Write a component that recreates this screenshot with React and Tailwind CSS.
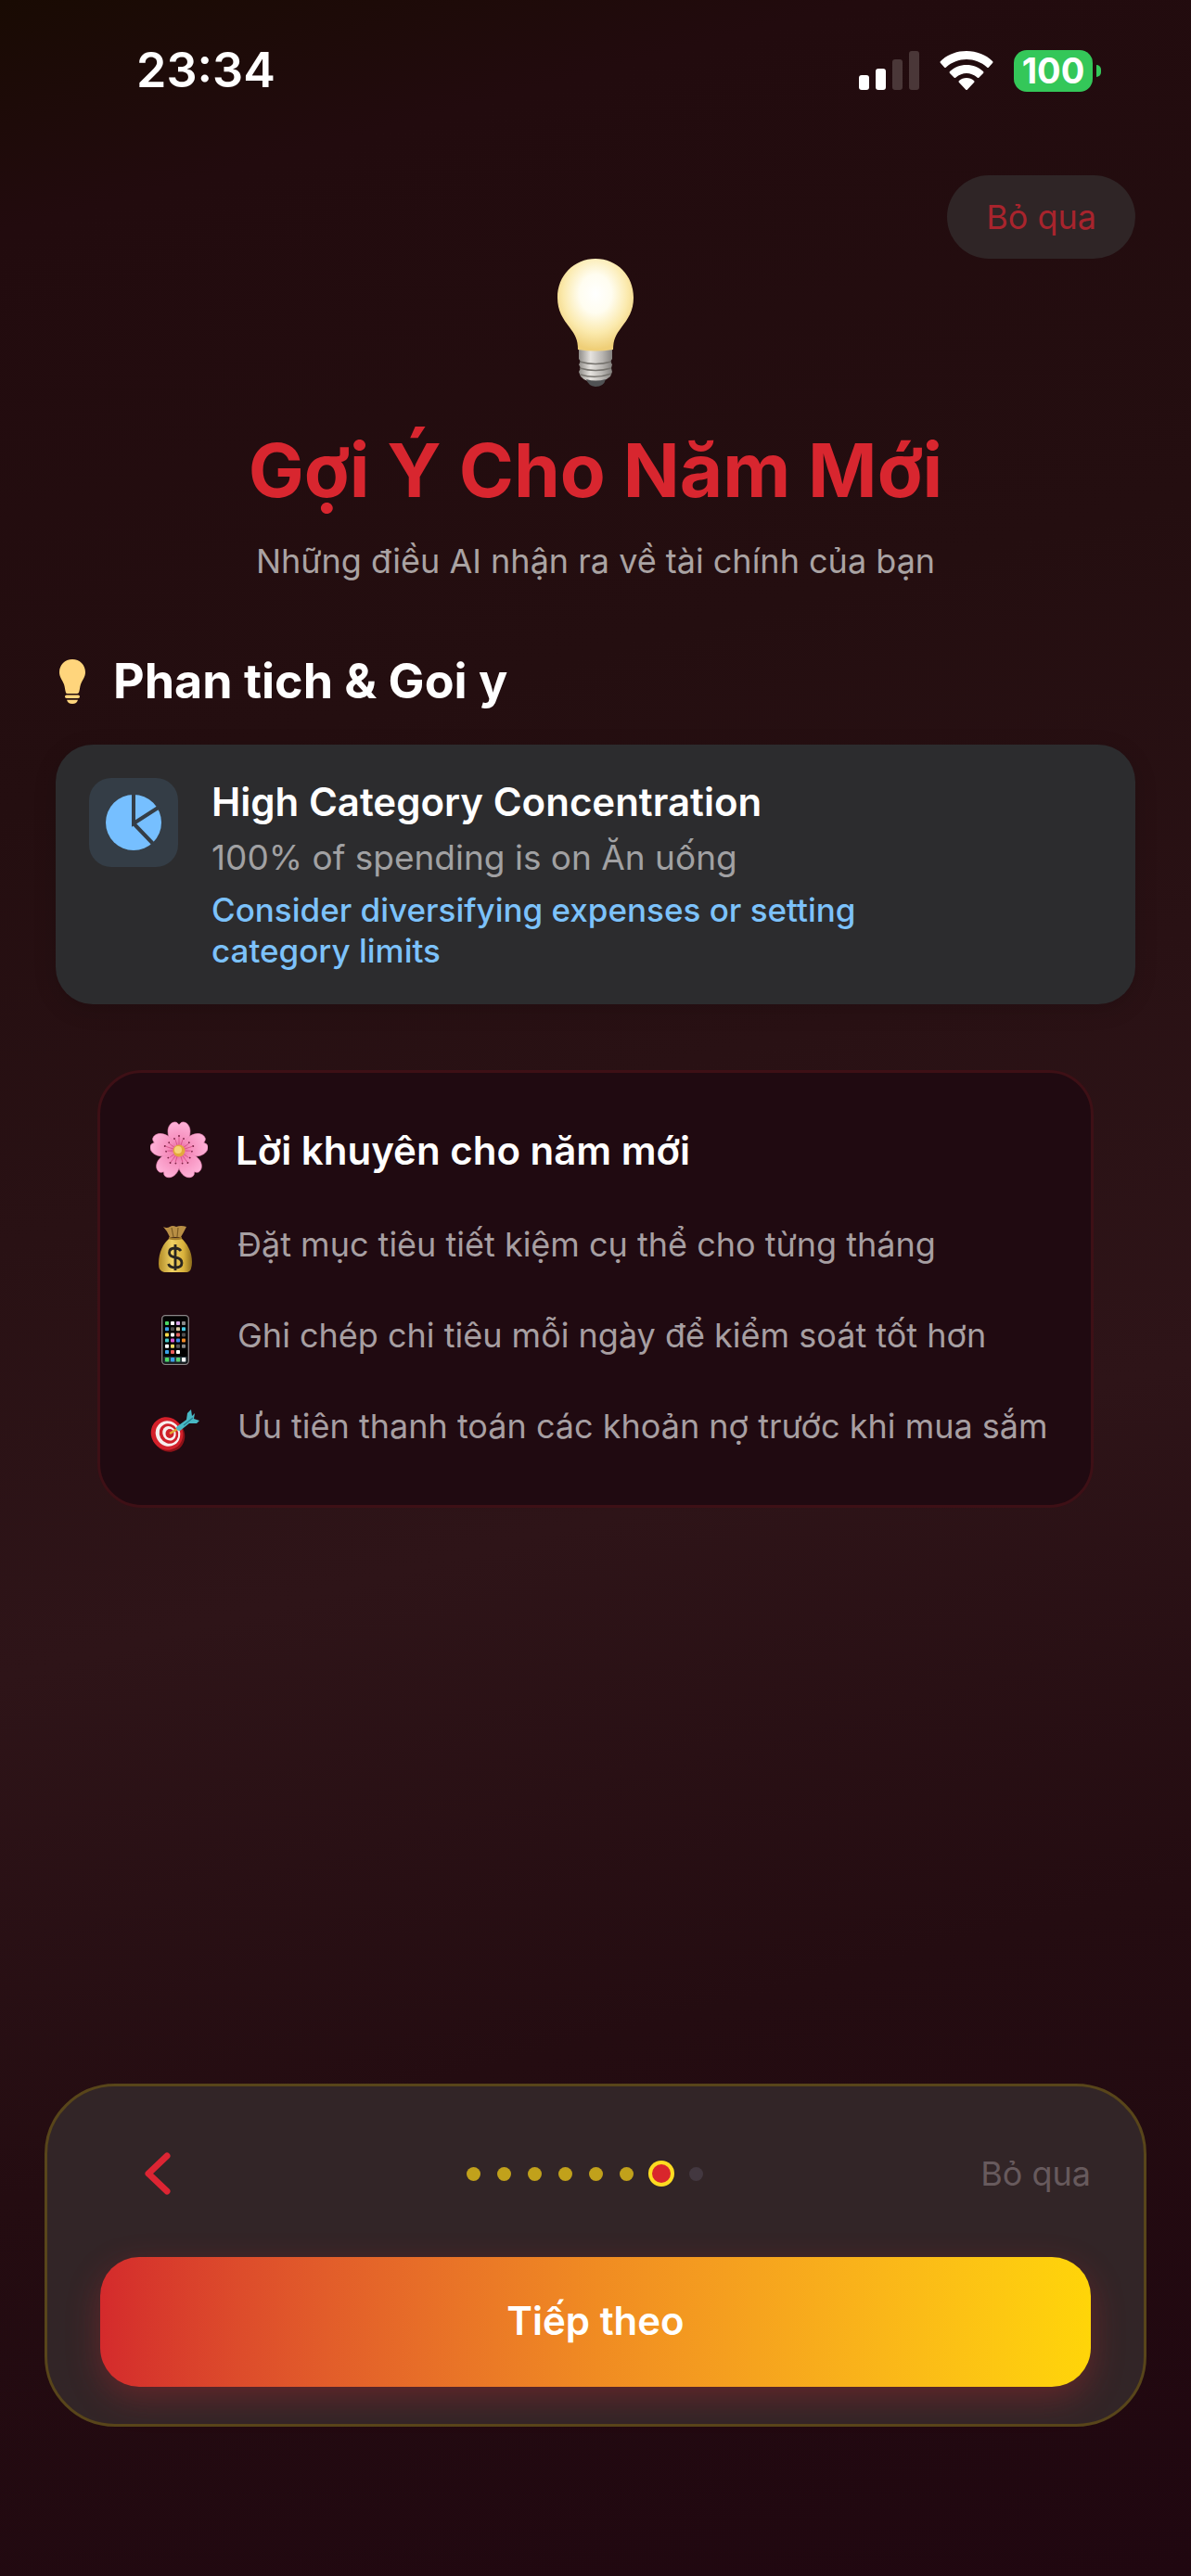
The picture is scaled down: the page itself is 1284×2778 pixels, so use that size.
import React from "react";

const BulbEmoji = () => (
  <svg viewBox="0 0 82 138" className="w-[82px] h-[138px]" aria-hidden="true">
    <defs>
      <radialGradient id="glass" cx="0.5" cy="0.38" r="0.6">
        <stop offset="0" stopColor="#ffffff" />
        <stop offset="0.35" stopColor="#fffdf0" />
        <stop offset="0.7" stopColor="#fbeaae" />
        <stop offset="1" stopColor="#efcf78" />
      </radialGradient>
      <linearGradient id="screw" x1="0" x2="1" y1="0" y2="0">
        <stop offset="0" stopColor="#8f8c88" />
        <stop offset="0.35" stopColor="#e6e3df" />
        <stop offset="0.7" stopColor="#b9b6b2" />
        <stop offset="1" stopColor="#85827f" />
      </linearGradient>
    </defs>
    <path d="M23 97 H59 V108 L57 111 L59 114 L58 118 L59 122 L57 127 Q50 133 41 133 Q30 133 25 127 L23 122 L25 118 L23 114 L25 111 L23 108Z" fill="url(#screw)" />
    <path d="M24 111 Q41 116 58 111 M24 118 Q41 123 58 118 M25 125 Q41 130 58 124" stroke="#77746f" strokeWidth="1.5" fill="none" />
    <path d="M31 130 Q41 133 52 130 Q50 138 41 138 Q33 137 31 130Z" fill="#505254" />
    <path d="M41 0 C64 0 82 18 82 42 C82 56 76 65 69 74 C63 82 60 87 60 98 Q41 101 22 98 C22 87 19 82 13 74 C6 65 0 56 0 42 C0 18 18 0 41 0Z" fill="url(#glass)" />
  </svg>
);

const BulbIcon = () => (
  <svg viewBox="0 0 28 48" className="w-7 h-12" fill="#ffd57c" aria-hidden="true">
    <path d="M14 0 C22 0 28 6 28 14 C28 19 25 22 23 27 C22 30 22 33 21 36 Q20 37 19 37 H9 Q7 37 7 36 C6 33 6 30 5 27 C3 22 0 19 0 14 C0 6 6 0 14 0Z" />
    <rect x="6" y="38.5" width="16" height="3.6" rx="1.8" />
    <path d="M8 43.8 H20 Q19 48 14 48 Q9 48 8 43.8Z" />
  </svg>
);

const PieIcon = () => (
  <svg viewBox="0 0 60 60" className="w-[60px] h-[60px]" aria-hidden="true">
    <circle cx="30" cy="30" r="30" fill="#76bfff" />
    <path d="M30 -2 V31 L58 13 M30 31 L53 55" stroke="#343d46" strokeWidth="4" fill="none" />
  </svg>
);

const Flower = () => (
  <svg viewBox="-31 -32 62 64" className="w-[62px] h-[64px]" aria-hidden="true">
    <defs>
      <radialGradient id="petal" gradientUnits="userSpaceOnUse" cx="0" cy="0" r="32">
        <stop offset="0" stopColor="#e0558f" />
        <stop offset="0.35" stopColor="#f58cbb" />
        <stop offset="1" stopColor="#ffb4da" />
      </radialGradient>
    </defs>
    {[0, 72, 144, 216, 288].map((angle) => (
      <g key={angle} transform={`rotate(${angle})`}>
        <path d="M0 0 C-7 -7 -12 -13 -12 -21 C-12 -26 -9 -31 -4 -31 Q-2 -31 0 -28 Q2 -31 4 -31 C9 -31 12 -26 12 -21 C12 -13 7 -7 0 0Z" fill="url(#petal)" stroke="#f08abb" strokeWidth="0.6" />
        <path d="M0 -6 V-15 M-2 -6 L-4 -12 M2 -6 L4 -12" stroke="#d2477f" strokeWidth="0.7" />
        <circle cx="0" cy="-16" r="1" fill="#7d2345" />
        <circle cx="-5" cy="-13" r="0.9" fill="#7d2345" />
        <circle cx="5" cy="-13" r="0.9" fill="#7d2345" />
      </g>
    ))}
    <circle r="6.5" fill="#e3a93c" />
    <circle cx="-1" cy="-1" r="4" fill="#f6d377" />
  </svg>
);

const MoneyBag = () => (
  <svg viewBox="0 0 36 50" className="w-9 h-[50px]" aria-hidden="true">
    <defs>
      <linearGradient id="bag" x1="0" x2="1" y1="0" y2="0">
        <stop offset="0" stopColor="#b18a26" />
        <stop offset="0.4" stopColor="#f0d264" />
        <stop offset="0.75" stopColor="#d9b23c" />
        <stop offset="1" stopColor="#8c6c1c" />
      </linearGradient>
    </defs>
    <path d="M5 1 Q9 3 12 1 Q15 -1 19 1 Q24 -1 30 1 Q27 7 24 12 H12 Q9 5 5 1Z" fill="#b98f45" />
    <path d="M12 13 H24 C30 18 36 27 36 39 Q36 49 31 50 H6 Q0 49 0 41 C0 28 5 19 12 13Z" fill="url(#bag)" />
    <path d="M14 2 L16 12 M21 2 L20 12" stroke="#7d5c22" strokeWidth="1.2" />
    <path d="M11 13 Q18 15 25 13" stroke="#a27a2a" strokeWidth="2.4" fill="none" />
    <path d="M24 27 Q22 24 17.500 24 Q11.500 24 11.500 29 Q11.500 33 18 34 Q25 35 25 40 Q25 45 18 45 Q12 45 10.500 41 M18 20 V48" stroke="#2a2620" strokeWidth="2.8" fill="none" />
  </svg>
);

const phoneApps = [
  ["#4cd964", "#ffffff", "#d9a3e8", "#8a8a8a"],
  ["#3aa0e8", "#4a4a4a", "#d8c8a0", "#45c8e0"],
  ["#f4d94a", "#ffffff", "#e0605c", "#505050"],
  ["#48c8c8", "#d557d0", "#3a8ce8", "#f08a28"],
  ["#ffffff", "#e8d860", "#555555", "#888888"],
  ["#3aa0e8", "#e85a5a", "#ffffff", "#000000"],
];

const Phone = () => (
  <svg viewBox="0 0 30 54" className="w-[30px] h-[54px]" aria-hidden="true">
    <rect x="0.7" y="0.7" width="28.600" height="52.600" rx="3.500" fill="#020202" stroke="#8b8688" strokeWidth="1.3" />
    {phoneApps.map((row, r) =>
      row.map((color, c) => <rect key={`${r}-${c}`} x={4 + c * 6} y={7 + r * 6.2} width="4" height="4" rx="0.8" fill={color} />)
    )}
    <rect x="2.500" y="45" width="25" height="6.500" fill="#26353c" />
    {["#4cd964", "#3aa0e8", "#58d070", "#ffffff"].map((color, c) => (
      <rect key={c} x={4 + c * 6} y="46" width="4.200" height="4.500" rx="0.8" fill={color} />
    ))}
  </svg>
);

const Target = () => (
  <svg viewBox="0 0 54 46" className="w-[54px] h-[46px]" aria-hidden="true">
    <ellipse cx="20" cy="28" rx="17" ry="18" transform="rotate(-30 20 28)" fill="#8e1218" />
    <ellipse cx="18" cy="26" rx="17" ry="18" transform="rotate(-30 18 26)" fill="#d3202a" />
    <ellipse cx="19" cy="26" rx="13" ry="14" transform="rotate(-30 19 26)" fill="#f7efee" />
    <ellipse cx="20" cy="26" rx="10" ry="11" transform="rotate(-30 20 26)" fill="#cf2029" />
    <ellipse cx="20.500" cy="26" rx="7" ry="8" transform="rotate(-30 20 26)" fill="#f7efee" />
    <ellipse cx="21" cy="26" rx="4.500" ry="5" fill="#cf2029" />
    <path d="M21 26 L31 20" stroke="#e0a832" strokeWidth="2.5" />
    <path d="M28 19 L39 11 L40 4 L44 0 L45 7 L48 4 L47 10 L53 12 L50 15 L42 15 L32 23 Q28 23 28 19Z" fill="#48b8c4" />
    <path d="M36 17 L46 9" stroke="#237f8f" strokeWidth="1.2" />
  </svg>
);

const StatusBar = () => (
  <div className="flex items-center justify-between pl-[147px] pr-[97px] pt-[42px]">
    <span className="text-[52px] leading-[68px] font-semibold text-white">23:34</span>
    <div className="flex items-center gap-[22px]">
      <svg viewBox="0 0 65 42" className="w-[65px] h-[42px]" fill="#ffffff" role="img" aria-label="Signal">
        <rect x="0" y="26" width="11" height="16" rx="3" />
        <rect x="18" y="19" width="11" height="23" rx="3" />
        <rect x="36" y="9" width="11" height="33" rx="3" fill="#4a3738" />
        <rect x="54" y="0" width="11" height="42" rx="3" fill="#4a3738" />
      </svg>
      <svg viewBox="0 0 58 42" className="w-[58px] h-[42px]" fill="#ffffff" role="img" aria-label="Wi-Fi">
        <path d="M29 0 C40 0 50 4 57 11 Q58 12 57 13 L53 17.500 Q52 18.500 51 17.500 C45 12 37 9 29 9 C21 9 13 12 7 17.500 Q6 18.500 5 17.500 L1 13 Q0 12 1 11 C8 4 18 0 29 0Z" />
        <path d="M29 15 C36 15 42 17.500 47 22 Q48 23 47 24 L42.500 28.500 Q41.500 29.500 40.500 28.500 C37 25.500 33 24 29 24 C25 24 21 25.500 17.500 28.500 Q16.500 29.500 15.500 28.500 L11 24 Q10 23 11 22 C16 17.500 22 15 29 15Z" />
        <path d="M29 29 C32 29 35 30 37 32 Q38 33 37 34 L30 41.500 Q29 42.500 28 41.500 L21 34 Q20 33 21 32 C23 30 26 29 29 29Z" />
      </svg>
      <div className="flex items-center gap-1">
        <span className="flex h-[45px] w-[85px] items-center justify-center rounded-[14px] bg-[#34c759] text-[38px] leading-none font-bold text-white">100</span>
        <span className="h-[13px] w-[5px] rounded-r-full bg-[#34c759]" />
      </div>
    </div>
  </div>
);

const tips = [
  { icon: <MoneyBag />, text: "Đặt mục tiêu tiết kiệm cụ thể cho từng tháng" },
  { icon: <Phone />, text: "Ghi chép chi tiêu mỗi ngày để kiểm soát tốt hơn" },
  { icon: <Target />, text: "Ưu tiên thanh toán các khoản nợ trước khi mua sắm" },
];

const STEPS = 8;
const CURRENT = 6;

const StepDot = ({ index }) => {
  if (index === CURRENT) return <span className="size-6 rounded-full border-2 border-[#fddc22] bg-[#d9262c] ring-2 ring-[#fddc22]" />;
  if (index < CURRENT) return <span className="size-[15px] rounded-full bg-[#c1a11b]" />;
  return <span className="size-[15px] rounded-full bg-[#433840]" />;
};

const App = () => {
  return (
    <div className="flex min-h-screen flex-col bg-[linear-gradient(165deg,#190b03_0%,#220b0e_8%,#240e10_28%,#2e1418_58%,#240c11_76%,#200710_100%)] font-['Inter','Noto_Sans',sans-serif]">
      <StatusBar />

      <header className="flex flex-col items-center">
        <button className="mt-[79px] mr-[60px] h-[90px] self-end rounded-full bg-[#2f2526] px-[42px] text-[36px] leading-[44px] text-[#a8242d]">Bỏ qua</button>
        <BulbEmoji />
        <h1 className="mt-[40px] text-[80px] leading-[100px] font-bold text-[#d8262f]">Gợi Ý Cho Năm Mới</h1>
        <p className="mt-6 text-[36px] leading-[48px] text-[#aaa3a3]">Những điều AI nhận ra về tài chính của bạn</p>
      </header>

      <main className="flex flex-1 flex-col px-[60px]">
        <section>
          <h2 className="mt-[74px] flex items-center gap-[30px] pl-1 text-[52px] leading-[64px] font-bold text-white">
            <BulbIcon />
            Phan tich &amp; Goi y
          </h2>
          <article className="mt-[36px] flex gap-9 rounded-[40px] bg-[#2c2c2e] p-9 shadow-[0_6px_24px_rgba(0,0,0,0.15)]">
            <div className="flex size-24 shrink-0 items-center justify-center rounded-[24px] bg-[#343d46]">
              <PieIcon />
            </div>
            <div className="max-w-[760px]">
              <h3 className="text-[42px] leading-[52px] font-semibold text-white">High Category Concentration</h3>
              <p className="mt-[10px] text-[37px] leading-[48px] text-[#a1a1a3]">100% of spending is on Ăn uống</p>
              <p className="mt-[10px] text-[35px] leading-[44px] font-medium text-[#7cc2fb]">Consider diversifying expenses or setting category limits</p>
            </div>
          </article>
        </section>

        <section className="mx-[45px] mt-[71px] rounded-[48px] border-3 border-[#3e1016] bg-[#200a11] pt-[50px] pr-[30px] pb-[36px] pl-[54px]">
          <h2 className="flex items-center gap-[30px] text-[42px] leading-[68px] font-semibold text-white">
            <Flower />
            Lời khuyên cho năm mới
          </h2>
          <ul className="mt-[18px] flex flex-col">
            {tips.map((tip) => (
              <li key={tip.text} className="flex h-[98px] items-center gap-10 text-[36px] leading-[48px] text-[#a79fa2]">
                <span className="flex w-[54px] shrink-0 justify-center pt-[10px]">{tip.icon}</span>
                {tip.text}
              </li>
            ))}
          </ul>
        </section>
      </main>

      <nav className="mx-[48px] mb-[161px] rounded-[76px] border-3 border-[#58451a] bg-[#322527] px-[57px] pt-[60px] pb-[40px]">
        <div className="flex items-center justify-between">
          <button aria-label="Back" className="flex h-[68px] w-24 items-center justify-end pr-5">
            <svg viewBox="0 0 28 46" className="w-7 h-[46px]" fill="none" stroke="#dc2533" strokeWidth="7" strokeLinecap="round" strokeLinejoin="round">
              <path d="M24 4 L4 23 L24 42" />
            </svg>
          </button>
          <div className="flex items-center gap-[18px]">
            {Array.from({ length: STEPS }, (_, i) => (
              <StepDot key={i} index={i} />
            ))}
          </div>
          <button className="text-[36px] leading-[44px] text-[#675a5d]">Bỏ qua</button>
        </div>
        <button className="mt-[56px] h-[140px] w-full rounded-[42px] bg-linear-to-r from-[#d42a2c] via-[#f08b22] to-[#ffd508] pb-1 text-[42px] font-semibold text-white shadow-[0_12px_36px_rgba(212,42,50,0.3)]">
          Tiếp theo
        </button>
      </nav>
    </div>
  );
};

export default App;
